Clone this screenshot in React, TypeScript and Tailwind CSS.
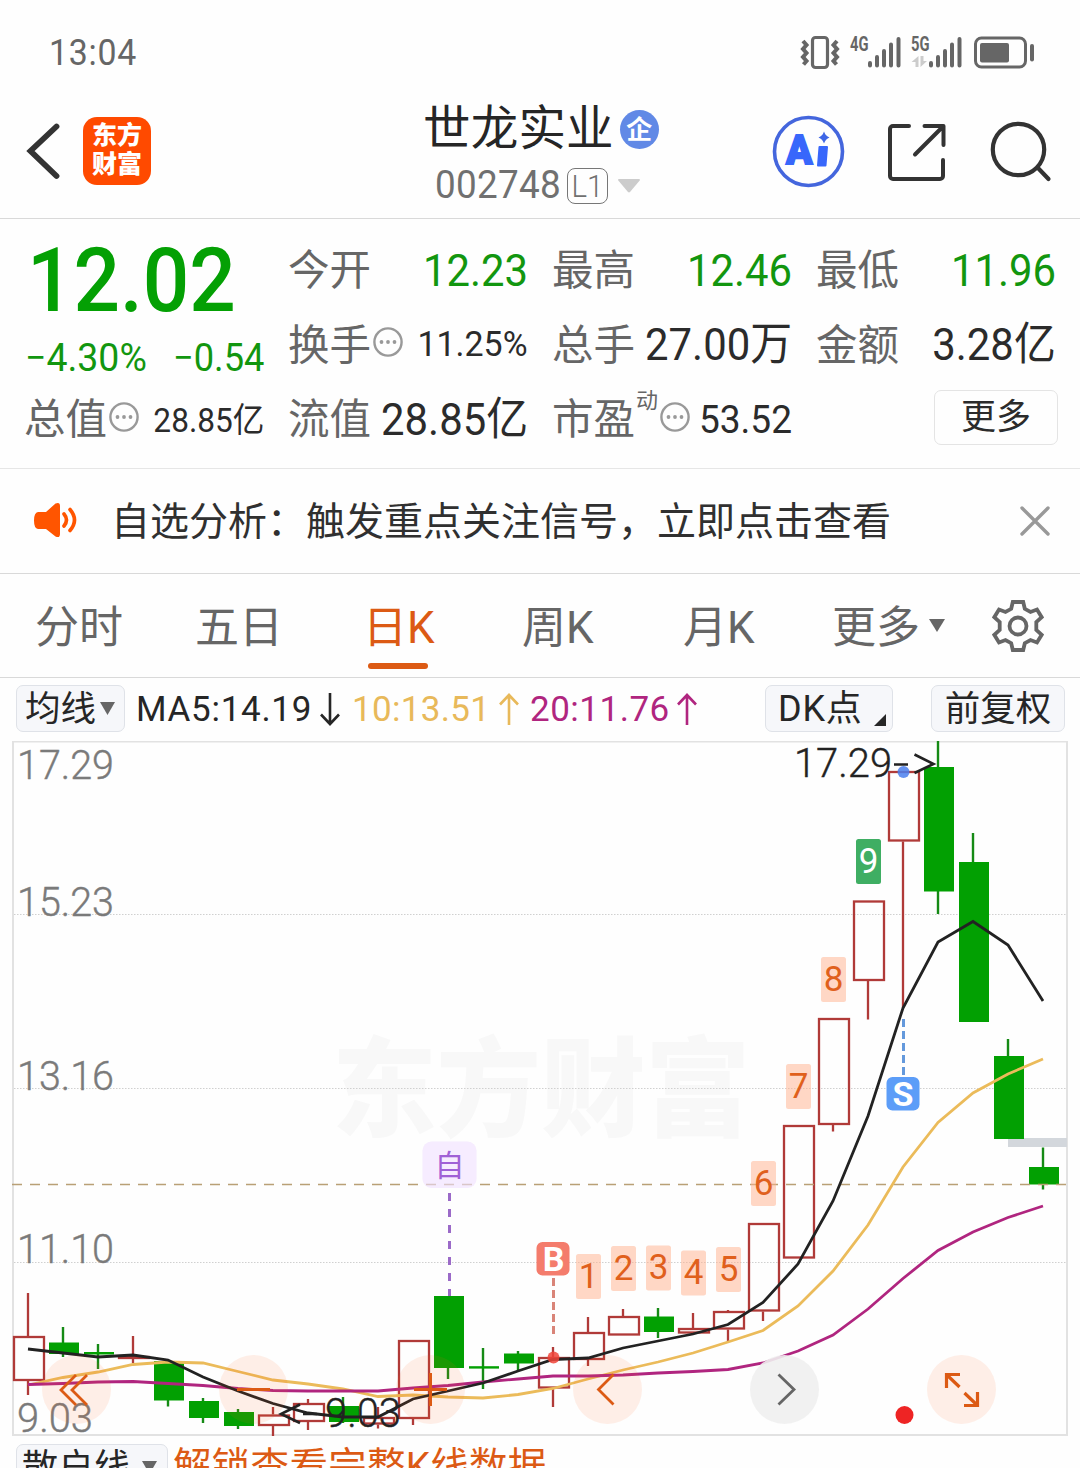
import React from "react";

const FONT = "font-[Roboto,'Noto_Sans_CJK_SC',sans-serif]";

type Candle = { up?: boolean; hi: number; top: number; bot: number; lo: number };

const candles: Candle[] = [
  { up: true, hi: 1293, top: 1336, bot: 1381, lo: 1395 },
  { hi: 1327, top: 1342.5, bot: 1354, lo: 1357 },
  { hi: 1344, top: 1352, bot: 1354.5, lo: 1369 },
  { up: true, hi: 1336, top: 1356, bot: 1359, lo: 1363 },
  { hi: 1361, top: 1361, bot: 1400.5, lo: 1406.5 },
  { hi: 1398, top: 1401, bot: 1418, lo: 1423 },
  { hi: 1409, top: 1412, bot: 1426, lo: 1429 },
  { up: true, hi: 1407, top: 1414.5, bot: 1426, lo: 1436 },
  { up: true, hi: 1399, top: 1403, bot: 1422, lo: 1430 },
  { hi: 1397, top: 1406, bot: 1422, lo: 1423 },
  { up: true, hi: 1407, top: 1417, bot: 1424.5, lo: 1428.5 },
  { up: true, hi: 1340, top: 1340, bot: 1419, lo: 1425 },
  { hi: 1296, top: 1296, bot: 1368, lo: 1379 },
  { hi: 1348, top: 1366.2, bot: 1368.6, lo: 1389 },
  { hi: 1351, top: 1353.5, bot: 1363.5, lo: 1371 },
  { up: true, hi: 1347, top: 1357, bot: 1388.5, lo: 1407 },
  { up: true, hi: 1317, top: 1332, bot: 1360, lo: 1366 },
  { up: true, hi: 1309, top: 1316, bot: 1335.5, lo: 1335.5 },
  { hi: 1308, top: 1316.5, bot: 1332, lo: 1338 },
  { up: true, hi: 1313, top: 1328, bot: 1333.5, lo: 1333.5 },
  { up: true, hi: 1310, top: 1311, bot: 1329.5, lo: 1341 },
  { up: true, hi: 1223, top: 1223, bot: 1311.5, lo: 1321 },
  { up: true, hi: 1125, top: 1125, bot: 1258.5, lo: 1258.5 },
  { up: true, hi: 1018, top: 1018, bot: 1125, lo: 1131.5 },
  { up: true, hi: 900.5, top: 900.5, bot: 981, lo: 1019.5 },
  { up: true, hi: 771, top: 771, bot: 841.5, lo: 1008 },
  { hi: 741, top: 767, bot: 891.5, lo: 914 },
  { hi: 833, top: 862, bot: 1022, lo: 1022 },
  { hi: 1039, top: 1056, bot: 1139, lo: 1139 },
  { hi: 1147.5, top: 1167, bot: 1184.5, lo: 1189.5 },
];

const ma5 = [1349, 1353, 1357, 1355, 1360, 1377, 1391, 1403.5, 1413, 1417, 1417, 1399, 1391, 1383, 1371, 1359.5, 1358, 1348, 1341, 1334, 1324.5, 1302.5, 1264, 1201, 1116, 1008, 942, 921.5, 945, 1001];
const ma10 = [1385, 1377.5, 1372, 1364.5, 1362, 1363, 1371.5, 1380, 1384, 1389, 1396.5, 1395, 1397, 1398, 1394.5, 1388.5, 1379, 1370, 1362, 1353, 1342, 1330.5, 1306, 1271, 1225, 1167, 1122.5, 1093, 1074, 1059];
const ma20 = [1384.5, 1383.5, 1382, 1381.5, 1383.5, 1385.5, 1388.5, 1390.5, 1391, 1391, 1391, 1388, 1385.5, 1382, 1379, 1376, 1376, 1375, 1373, 1371.5, 1369.5, 1363, 1351, 1335, 1309, 1278.5, 1250.5, 1232, 1217.5, 1206];

const toPoints = (ys: number[]) => ys.map((y, i) => `${28 + 35 * i},${y}`).join(" ");

const counts = [
  { n: "1", x: 576, y: 1254 },
  { n: "2", x: 611, y: 1246 },
  { n: "3", x: 646, y: 1245.5 },
  { n: "4", x: 681, y: 1250.5 },
  { n: "5", x: 716, y: 1247 },
  { n: "6", x: 751, y: 1161 },
  { n: "7", x: 786, y: 1064 },
  { n: "8", x: 821, y: 957 },
  { n: "9", x: 856, y: 839 },
];

const axis = [
  { t: "17.29", y: 779, w: 95 },
  { t: "15.23", y: 915.5, w: 95 },
  { t: "13.16", y: 1089.5, w: 95 },
  { t: "11.10", y: 1262.5, w: 95 },
  { t: "9.03", y: 1431.5, w: 74 },
];

function StatusBar() {
  return (
    <div className="flex h-[104px] items-center justify-between pr-[46px] pl-[49px] text-[#666]">
      <span className="mt-px origin-left text-[36px] leading-none tracking-[0.8px] scale-x-[0.94]">13:04</span>
      <svg width="234" height="36" viewBox="800 34 234 36" className="block" fill="none" stroke="#666">
        <rect x="812.5" y="37.500" width="15" height="30" rx="3" strokeWidth="3.200" />
        <path d="M803 41l3.500 4-3.500 4 3.500 4-3.500 4 3.500 4-3 3.500M837 41l-3.500 4 3.500 4-3.500 4 3.500 4-3.500 4 3 3.500" strokeWidth="4" />
        <text x="850" y="50.500" fontSize="19.500" fontWeight="700" fill="#666" stroke="none" textLength="18.500" lengthAdjust="spacingAndGlyphs">4G</text>
        <text x="911" y="50.500" fontSize="19.500" fontWeight="700" fill="#666" stroke="none" textLength="18.500" lengthAdjust="spacingAndGlyphs">5G</text>
        <g strokeWidth="4" strokeLinecap="round">
          <path d="M870 63v2.500M877 57v8.500M884 51v14.500M891 44.500v21M898.500 39v26.500" />
          <path d="M931 63v2.500M938 57v8.500M945 51v14.500M952 44.500v21M959.500 39v26.500" />
        </g>
        <path d="M918.500 56v11h-3v-5h-4zM920.500 56h3v5h3.500l-6.500 6z" fill="#ccc" stroke="none" />
        <rect x="975.500" y="38" width="50" height="29" rx="6" strokeWidth="3" />
        <rect x="980" y="43" width="29" height="19.500" rx="2" fill="#666" stroke="none" />
        <rect x="1030" y="44" width="4" height="17.500" rx="2" fill="#666" stroke="none" />
      </svg>
    </div>
  );
}

function Header() {
  return (
    <header className="flex h-[115px] border-b border-[#d9d9d9]">
      <div className="flex h-[94px] w-[424px] items-center pl-[25px]">
        <svg width="36" height="58" viewBox="0 0 36 58" fill="none">
          <path d="M31.500 4.500L5.500 29l26 25" stroke="#333" strokeWidth="5.800" strokeLinecap="round" strokeLinejoin="miter" />
        </svg>
        <div className="ml-[22px] flex size-[68px] flex-col items-center justify-center rounded-[14px] bg-[#ff4a00] pb-px text-[25px] leading-[28.500px] font-black text-white">
          <span>东方</span>
          <span>财富</span>
        </div>
      </div>
      <div className="flex w-[348px] flex-col">
        <div className="flex h-[51px] items-center">
          <span className="-ml-px text-[47.500px] leading-[51px] tracking-[0.200px] text-[#262626]">世龙实业</span>
          <span className="ml-[6px] flex size-[39px] items-center justify-center rounded-full bg-[#6189e6]">
            <span className="text-[26px] leading-none font-bold text-white">企</span>
          </span>
        </div>
        <div className="flex h-[61px] items-center pl-[11px]">
          <span className="w-[132px] origin-left text-[38px] leading-[61px] tracking-[0.300px] text-[#707070] scale-x-[0.97]">002748</span>
          <span className="flex h-[36px] w-[41px] items-center justify-center rounded-[8px] border-[1.500px] border-[#777] text-[#707070]">
            <span className="text-[32px] leading-none font-light scale-x-[0.920]">L1</span>
          </span>
          <svg width="22" height="14" viewBox="0 0 22 14" className="ml-[10px]">
            <path d="M1 0h20a1 1 0 0 1 .7 1.500L12 13a1.500 1.500 0 0 1-2 0L.3 1.500A1 1 0 0 1 1 0z" fill="#ccc" />
          </svg>
        </div>
      </div>
      <div className="flex h-[95px] items-center">
        <svg width="73" height="73" viewBox="772 115 73 73">
          <circle cx="808.500" cy="151.500" r="34" fill="none" stroke="#4466dd" strokeWidth="3.600" />
          <text x="786" y="164" fontSize="41" fontWeight="900" fill="#3867fb" stroke="#3867fb" strokeWidth="1.800" textLength="26.500" lengthAdjust="spacingAndGlyphs">A</text>
          <path d="M819.500 147h7.500l-1.500 18.500h-7.500z" fill="#3867fb" stroke="#3867fb" strokeWidth="2" strokeLinejoin="round" />
          <path d="M824 131.500q1.500 4.500 5.500 6-4 1.500-5.500 6-1.500-4.500-5.500-6 4-1.500 5.500-6z" fill="#3e66e6" />
        </svg>
        <svg width="60" height="60" viewBox="887 121 60 60" className="ml-[42px]" fill="none" stroke="#333" strokeWidth="4" strokeLinecap="round" strokeLinejoin="round">
          <path d="M909 125h-16a3 3 0 0 0-3 3v47a3 3 0 0 0 3 3h47a3 3 0 0 0 3-3v-16M924.500 125H943.500v19M943 125.500l-28 28" />
        </svg>
        <svg width="62" height="62" viewBox="990 120 62 62" className="ml-[43px]" fill="none" stroke="#333" strokeWidth="4.200" strokeLinecap="round">
          <circle cx="1018.500" cy="148.500" r="25.700" />
          <path d="M1038 167l10.500 11" />
        </svg>
      </div>
    </header>
  );
}

function Info({ className = "" }: { className?: string }) {
  return (
    <svg width="30" height="30" viewBox="0 0 30 30" className={`block shrink-0 ${className}`}>
      <circle cx="15" cy="15" r="13.600" fill="none" stroke="#999" strokeWidth="2.400" />
      <circle cx="8.500" cy="15" r="1.900" fill="#999" />
      <circle cx="15" cy="15" r="1.900" fill="#999" />
      <circle cx="21.500" cy="15" r="1.900" fill="#999" />
    </svg>
  );
}

function Stat({ label, value, info, sup, tone = "text-[#2b2b2b]", size = "text-[45px] scale-x-[0.93]" }: { label: string; value: string; info?: boolean; sup?: string; tone?: string; size?: string }) {
  return (
    <div className="flex h-[74.500px] items-center">
      <span className="-ml-px shrink-0 pt-[4px] text-[41.500px] leading-[74px] text-[#666]">{label}</span>
      {sup && <span className="-mr-px mb-[34px] w-[24px] shrink-0 pl-px text-[22px] leading-none text-[#666]">{sup}</span>}
      {info && <Info className="mb-[3px] ml-[2px]" />}
      <span className={`ml-auto w-0 grow pt-[3px] text-right leading-[74px] whitespace-nowrap ${tone}`}>
        <span className={`float-right inline-block origin-right ${size}`}>{value}</span>
      </span>
    </div>
  );
}

function Quote() {
  return (
    <section className="grid h-[250px] grid-cols-[238px_238px_238px_238px] gap-x-[26px] border-b border-[#e6e6e6] pt-[13px] pl-[26px]">
      <div className="-ml-px flex flex-col">
        <div className="h-[97px] pl-[2px] text-[#04a004]">
          <span className="inline-block origin-left text-[89px] leading-[98px] font-medium scale-x-[0.92]">12.02</span>
        </div>
        <div className="flex h-[52px] items-center justify-between pt-[5px] text-[39px] leading-[52px] text-[#12960f]">
          <span className="w-[123px] origin-left whitespace-nowrap scale-x-[0.96]">−4.30%</span>
          <span className="w-[91px] origin-left whitespace-nowrap scale-x-[0.93]">−0.54</span>
        </div>
        <Stat label="总值" info value="28.85亿" size="text-[34px] scale-x-[0.93]" />
      </div>
      <div className="-ml-px flex flex-col">
        <Stat label="今开" value="12.23" tone="text-[#12960f]" />
        <Stat label="换手" info value="11.25%" size="text-[35px] scale-x-[0.97]" />
        <Stat label="流值" value="28.85亿" />
      </div>
      <div className="-ml-px flex flex-col">
        <Stat label="最高" value="12.46" tone="text-[#12960f]" />
        <Stat label="总手" value="27.00万" />
        <Stat label="市盈" sup="动" info value="53.52" size="text-[39px] scale-x-[0.95]" />
      </div>
      <div className="-ml-px flex flex-col">
        <Stat label="最低" value="11.96" tone="text-[#12960f]" />
        <Stat label="金额" value="3.28亿" />
        <button className="mt-[9px] -mr-[2px] ml-auto flex h-[55px] w-[124px] items-center justify-center rounded-[7px] border-[1.500px] border-[#e4e4e4] text-[35px] leading-none text-[#2b2b2b]">
          更多
        </button>
      </div>
    </section>
  );
}

function Notice() {
  return (
    <section className="flex h-[105px] items-center border-b border-[#d9d9d9] pl-[33px]">
      <svg width="46" height="36" viewBox="0 0 46 36" className="-mt-[2px]">
        <path d="M5 10h8L22.500 1.500Q27 -.5 27 4v28q0 4.500-4.500 2.500L13 27H5q-4-.5-4-8.500T5 10z" fill="#ff5500" />
        <path d="M31 12q5 6 0 12M37 7.500q9 10.500 0 21" fill="none" stroke="#ff5500" strokeWidth="3.600" strokeLinecap="round" />
      </svg>
      <span className="ml-[32px] pt-[2px] text-[39px] leading-none whitespace-nowrap text-[#303030]">自选分析：触发重点关注信号，立即点击查看</span>
      <svg width="30" height="30" viewBox="0 0 30 30" className="mr-[30px] mb-px ml-auto">
        <path d="M2 2l26 26M28 2L2 28" stroke="#999" strokeWidth="3.400" strokeLinecap="round" />
      </svg>
    </section>
  );
}

function Tabs() {
  return (
    <nav className="flex h-[104px] items-center border-b border-[#d9d9d9] pl-[35px] text-[44px] leading-[64px] whitespace-nowrap text-[#666]">
      <span className="w-[160px] pt-[4px]">分时</span>
      <span className="w-[168px] pt-[4px]">五日</span>
      <span className="relative w-[159px] pt-[4px] text-[#dc5a14]">
        日K
        <i className="absolute -bottom-[9px] left-[5px] h-[6px] w-[60px] rounded-full bg-[#dc5a14]" />
      </span>
      <span className="w-[161px] pt-[4px]">周K</span>
      <span className="w-[149px] pt-[4px]">月K</span>
      <span className="w-[97px] pt-[4px]">更多</span>
      <svg width="16" height="13" viewBox="0 0 16 13"><path d="M0 0h16L8 13z" fill="#666" /></svg>
      <svg width="54" height="54" viewBox="-27 -27 54 54" className="ml-[46px]" fill="none" stroke="#666" strokeWidth="3.800">
        <path d="M-5.200-24H5.200L6.800-17.200 12.500-14 19-16.500 23.700-8.800 18.300-4V4L23.700 8.800 19 16.500 12.500 14 6.800 17.200 5.200 24H-5.200L-6.800 17.200-12.500 14-19 16.500-23.700 8.800-18.300 4V-4L-23.700-8.800-19-16.500-12.500-14-6.800-17.200z" />
        <circle r="8.500" />
      </svg>
    </nav>
  );
}

function Arrow({ up, color }: { up?: boolean; color: string }) {
  return (
    <svg width="20" height="33" viewBox="0 0 20 33" fill="none" stroke={color} strokeWidth="2.600">
      {up ? <path d="M10 32V2M1 11.500L10 2l9 9.500" /> : <path d="M10 0v31M1 21.500L10 31l9-9.500" />}
    </svg>
  );
}

function Indicators() {
  return (
    <div className="flex h-[63px] items-start pt-[7px] pl-[16px] text-[35px] leading-[46px] whitespace-nowrap text-[#262626]">
      <span className="flex h-[47px] w-[109px] items-center rounded-[7px] border-[1.500px] border-[#dfe2e8] bg-[#f6f7fa] pl-[8px]">
        <span className="w-[75px] text-[35.500px]">均线</span>
        <svg width="15" height="13" viewBox="0 0 15 13"><path d="M0 0h15L7.500 13z" fill="#666" /></svg>
      </span>
      <span className="ml-[11px] w-[184px] origin-left pt-[1.500px] tracking-[0.700px]">MA5:14.19</span>
      <span className="mt-[8px] flex w-[32px]"><Arrow color="#262626" /></span>
      <span className="w-[147px] pt-[1.500px] text-[#e8b95a] tracking-[0.300px]">10:13.51</span>
      <span className="mt-[8px] flex w-[31px]"><Arrow up color="#e8b95a" /></span>
      <span className="w-[147px] pt-[1.500px] text-[#b0257f] tracking-[0.500px]">20:11.76</span>
      <span className="mt-[8px] flex w-[88px]"><Arrow up color="#b0257f" /></span>
      <span className="flex h-[47px] w-[128px] items-center rounded-[7px] border-[1.500px] border-[#dfe2e8] bg-[#f6f7fa] pl-[12px]">
        <span className="w-[96px] pt-px text-[36px] tracking-[0.800px]">DK点</span>
        <svg width="12" height="12" viewBox="0 0 12 12" className="mt-[22px]"><path d="M12 0v12H0z" fill="#262626" /></svg>
      </span>
      <span className="ml-[38px] flex h-[47px] w-[134px] items-center justify-center rounded-[7px] border-[1.500px] border-[#dfe2e8] bg-[#f6f7fa] pt-px text-[35.500px]">
        前复权
      </span>
    </div>
  );
}

function Chart() {
  return (
    <div className="relative h-[703px]">
      <svg width="1080" height="703" viewBox="0 741 1080 703" className="block" fill="none">
        <text x="332" y="1128" fontSize="108" fontWeight="900" fill="#f8f8f8" textLength="418" lengthAdjust="spacingAndGlyphs">东方财富</text>
        <path d="M13 741.500H1067V1435H13z" stroke="#e2e2e2" strokeWidth="2" />
        <path d="M14 914.500H1066M14 1088.500H1066M14 1262.500H1066" stroke="#d0d0d0" strokeDasharray="1.500 1.500" />
        {axis.map((a) => (
          <text key={a.t} x="17" y={a.y} fontSize="41.500" fontWeight="300" fill="#7a7a7a" stroke="#7a7a7a" strokeWidth=".4" textLength={a.w + 2} lengthAdjust="spacingAndGlyphs">{a.t}</text>
        ))}
        <rect x="1008" y="1138" width="59" height="9" fill="#d3d7dc" />
        {candles.map((c, i) => {
          const x = 28 + 35 * i;
          if (c.up) {
            return (
              <g key={i} stroke="#b03a38" strokeWidth="2.300">
                <rect x={x - 14} y={c.top + 1} width="30" height={c.bot - c.top - 2} />
                {c.hi < c.top && <path d={`M${x} ${c.hi}V${c.top}`} />}
                {c.lo > c.bot && <path d={`M${x} ${c.bot}V${c.lo}`} />}
              </g>
            );
          }
          return (
            <g key={i}>
              <path d={`M${x} ${c.hi}V${c.lo}`} stroke="#158a15" strokeWidth="2.400" />
              <rect x={x - 14} y={c.top} width="30" height={c.bot - c.top} fill="#02a002" />
            </g>
          );
        })}
        <path d="M12 1184.500H1067" stroke="#b9a076" strokeWidth="1.300" strokeDasharray="10 8" />
        <polyline points={toPoints(ma10)} stroke="#ebbb5a" strokeWidth="2.800" />
        <polyline points={toPoints(ma20)} stroke="#b0257f" strokeWidth="2.800" />
        <polyline points={toPoints(ma5)} stroke="#222" strokeWidth="2.800" />

        {counts.map((c) => (
          <g key={c.n}>
            <rect x={c.x} y={c.y} width="25" height="45" rx="2.500" fill={c.n === "9" ? "#3fae63" : "#ffb08c"} fillOpacity={c.n === "9" ? 1 : 0.5} />
            <text x={c.x + 12.500} y={c.y + 33.500} fontSize="35" textAnchor="middle" fill={c.n === "9" ? "#fff" : "#e0601c"}>{c.n}</text>
          </g>
        ))}

        <path d="M449.500 1193V1296" stroke="#9b6ac8" strokeWidth="3" strokeDasharray="8 8" />
        <rect x="422.500" y="1141.500" width="54" height="46.500" rx="9" fill="#f0e0ff" fillOpacity=".6" />
        <text x="449.500" y="1175.500" fontSize="30" textAnchor="middle" fill="#a061d6">自</text>

        <path d="M553.500 1278V1334" stroke="#d98478" strokeWidth="3" strokeDasharray="8 4" />
        <rect x="536.500" y="1242" width="33" height="33.500" rx="6" fill="#f47c6c" />
        <text x="553.500" y="1271" fontSize="34" fontWeight="700" textAnchor="middle" fill="#fff">B</text>
        <circle cx="553.500" cy="1357.500" r="6" fill="#f04438" fillOpacity=".85" />

        <path d="M903.500 1019V1076" stroke="#6499dc" strokeWidth="3" strokeDasharray="8 4" />
        <rect x="886.500" y="1077" width="33" height="33.500" rx="6" fill="#5c9df8" />
        <text x="903" y="1106" fontSize="34" fontWeight="700" textAnchor="middle" fill="#fff">S</text>
        <circle cx="903.500" cy="772" r="6" fill="#4a7fee" fillOpacity=".85" />

        <text x="794" y="777" fontSize="41" fontWeight="300" fill="#222" stroke="#222" strokeWidth=".4" textLength="98" lengthAdjust="spacingAndGlyphs">17.29</text>
        <path d="M894 764.500h14M914.500 754.500l19 9.500-19 9M300 1404.500l-19 9.500 19 9M303 1414h14" stroke="#222" strokeWidth="2.600" />
        <text x="325" y="1426.500" fontSize="41" fontWeight="300" fill="#222" stroke="#222" strokeWidth=".4" textLength="76" lengthAdjust="spacingAndGlyphs">9.03</text>
        <circle cx="904.500" cy="1415" r="9" fill="#ee2424" />
      </svg>
      <div className="absolute top-[614px] left-[42px] flex gap-[108px]">
        <button className="size-[69px] rounded-full bg-[#ff6420]/10">
          <svg viewBox="0 0 69 69" fill="none" stroke="#dc5a14" strokeWidth="2.800"><path d="M34 20L19 35l15 15M45 20L30 35l15 15" /></svg>
        </button>
        <button className="size-[69px] rounded-full bg-[#ff6420]/10">
          <svg viewBox="0 0 69 69" fill="none" stroke="#dc5a14" strokeWidth="3"><path d="M18 34.500h33" /></svg>
        </button>
        <button className="size-[69px] rounded-full bg-[#ff6420]/10">
          <svg viewBox="0 0 69 69" fill="none" stroke="#dc5a14" strokeWidth="3"><path d="M18 34.500h33M34.500 18v33" /></svg>
        </button>
        <button className="size-[69px] rounded-full bg-[#ff6420]/10">
          <svg viewBox="0 0 69 69" fill="none" stroke="#dc5a14" strokeWidth="2.800"><path d="M40.500 19.500l-15 15 15 15" /></svg>
        </button>
        <button className="size-[69px] rounded-full bg-[#f0f0f0]/90">
          <svg viewBox="0 0 69 69" fill="none" stroke="#666" strokeWidth="2.800"><path d="M28.500 19.500l15.500 15-15.500 15" /></svg>
        </button>
        <button className="size-[69px] rounded-full bg-[#ff6420]/10">
          <svg viewBox="0 0 69 69" fill="none" stroke="#dc5a14" strokeWidth="3.200"><path d="M33 19.500H19.500V33M20 20l12.500 12M37 50.500h13.500V37M50 50L37.500 38" /></svg>
        </button>
      </div>
    </div>
  );
}

function BottomRow() {
  return (
    <div className="flex h-[46px] items-center pl-[16px] leading-[46px] whitespace-nowrap">
      <span className="flex h-[46px] w-[152px] shrink-0 items-center rounded-[7px] border-[1.500px] border-[#dfe2e8] bg-[#f6f7fa] pl-[5px] text-[36px] text-[#262626]">
        <span className="w-[120px] pt-px">散户线</span>
        <svg width="15" height="13" viewBox="0 0 15 13"><path d="M0 0h15L7.500 13z" fill="#666" /></svg>
      </span>
      <span className="ml-[5px] text-[38.500px] tracking-[0.300px] text-[#dc5a14]">解锁查看完整K线数据</span>
    </div>
  );
}

export default function App() {
  return (
    <main className={`h-[1468px] w-[1080px] overflow-hidden bg-[#fefefe] ${FONT}`}>
      <StatusBar />
      <Header />
      <Quote />
      <Notice />
      <Tabs />
      <Indicators />
      <Chart />
      <BottomRow />
    </main>
  );
}
